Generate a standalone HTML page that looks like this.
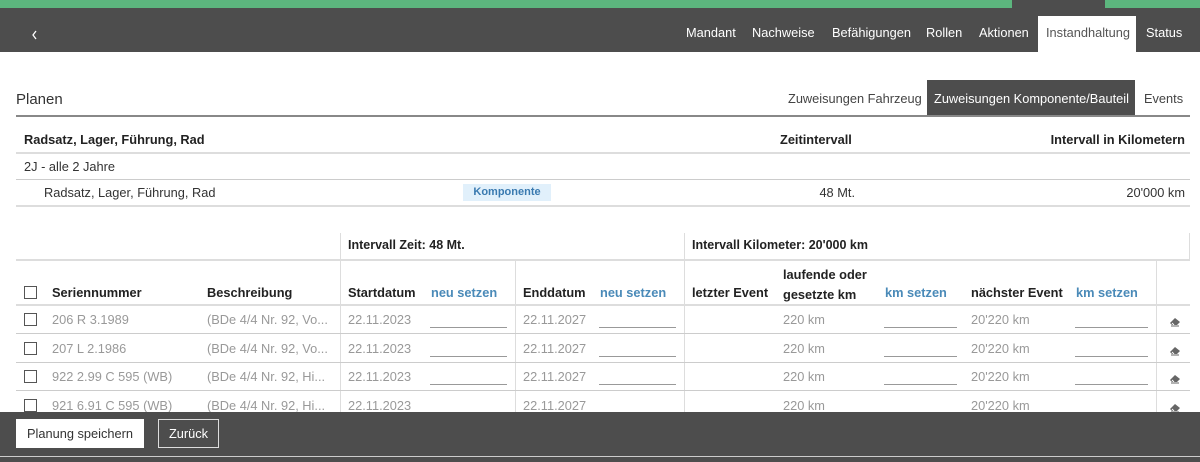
<!DOCTYPE html>
<html><head><meta charset="utf-8"><style>
*{margin:0;padding:0;box-sizing:border-box}
body{width:1200px;height:462px;overflow:hidden;background:#fff;font-family:"Liberation Sans",Arial,sans-serif;font-size:12.8px;color:#333;position:relative}
.a{position:absolute;white-space:nowrap}
.b{font-weight:bold;color:#222}
.g{color:#999}
.l{color:#4a8ab8;font-weight:bold}
.hl{position:absolute;height:1px;background:#ddd}
.vl{position:absolute;width:1px;background:#ddd}
.cb{position:absolute;width:13px;height:13px;border:1px solid #555;background:#fff}
.in{position:absolute;height:1px;background:#999}
.nav{position:absolute;top:25px;color:#fff;font-size:12.8px}
</style></head><body>
<div class="a" style="left:0;top:0;width:1200px;height:8px;background:#5cb67e"></div>
<div class="a" style="left:1012px;top:0;width:93px;height:8px;background:#4d4d4d"></div>
<div class="a" style="left:0;top:8px;width:1200px;height:44px;background:#4d4d4d"></div>
<svg class="a" style="left:31px;top:30px" width="7" height="10" viewBox="0 0 7 10"><path d="M5 1 L2 5 L5 9" stroke="#fff" stroke-width="1.3" fill="none"/></svg>
<div class="nav a" style="left:686px">Mandant</div>
<div class="nav a" style="left:752px">Nachweise</div>
<div class="nav a" style="left:832px">Befähigungen</div>
<div class="nav a" style="left:926px">Rollen</div>
<div class="nav a" style="left:979px">Aktionen</div>
<div class="a" style="left:1038px;top:16px;width:98px;height:36px;background:#fff"></div>
<div class="nav a" style="left:1046px;color:#555">Instandhaltung</div>
<div class="nav a" style="left:1146px">Status</div>

<div class="a" style="left:16px;top:91px;font-size:15px;color:#333">Planen</div>
<div class="a" style="left:788px;top:91px;color:#444">Zuweisungen Fahrzeug</div>
<div class="a" style="left:927px;top:80px;width:208px;height:36px;background:#4d4d4d"></div>
<div class="a" style="left:934px;top:91px;color:#fff">Zuweisungen Komponente/Bauteil</div>
<div class="a" style="left:1144px;top:91px;color:#444">Events</div>
<div class="a" style="left:16px;top:115px;width:1174px;height:2px;background:#888"></div>

<div class="a b" style="left:24px;top:132px">Radsatz, Lager, Führung, Rad</div>
<div class="a b" style="left:780px;top:132px">Zeitintervall</div>
<div class="a b" style="right:15px;top:132px">Intervall in Kilometern</div>
<div class="hl" style="left:16px;top:152px;width:1174px;height:2px"></div>
<div class="a" style="left:24px;top:159px">2J - alle 2 Jahre</div>
<div class="hl" style="left:16px;top:179px;width:1174px;background:#ccc"></div>
<div class="a" style="left:44px;top:185px">Radsatz, Lager, Führung, Rad</div>
<div class="a" style="left:463px;top:184px;width:88px;height:17px;background:#e1f0fb;color:#3a7ab0;font-weight:bold;font-size:11px;text-align:center;padding-top:2px">Komponente</div>
<div class="a" style="right:345px;top:185px">48 Mt.</div>
<div class="a" style="right:15px;top:185px">20'000 km</div>
<div class="hl" style="left:16px;top:205px;width:1174px;height:2px"></div>

<div class="vl" style="left:340px;top:233px;height:179px"></div>
<div class="vl" style="left:684px;top:233px;height:179px"></div>
<div class="vl" style="left:1189px;top:233px;height:27px"></div>
<div class="vl" style="left:515px;top:260px;height:152px"></div>
<div class="vl" style="left:1156px;top:260px;height:152px"></div>
<div class="a b" style="left:348px;top:238px;font-size:12.5px">Intervall Zeit: 48 Mt.</div>
<div class="a b" style="left:692px;top:238px;font-size:12.5px">Intervall Kilometer: 20'000 km</div>
<div class="hl" style="left:16px;top:259px;width:1174px;height:2px"></div>
<div class="cb" style="left:24px;top:286px"></div>
<div class="a b" style="left:52px;top:285px">Seriennummer</div>
<div class="a b" style="left:207px;top:285px">Beschreibung</div>
<div class="a b" style="left:348px;top:285px">Startdatum</div>
<div class="a l" style="left:431px;top:285px">neu setzen</div>
<div class="a b" style="left:523px;top:285px">Enddatum</div>
<div class="a l" style="left:600px;top:285px">neu setzen</div>
<div class="a b" style="left:692px;top:285px">letzter Event</div>
<div class="a b" style="left:783px;top:265px;line-height:20px">laufende oder<br>gesetzte km</div>
<div class="a l" style="left:885px;top:285px">km setzen</div>
<div class="a b" style="left:971px;top:285px">nächster Event</div>
<div class="a l" style="left:1076px;top:285px">km setzen</div>
<div class="hl" style="left:16px;top:304px;width:1174px;height:2px"></div>

<div id="rows"></div>
<script>
var d=[["206 R 3.1989","(BDe 4/4 Nr. 92, Vo..."],["207 L 2.1986","(BDe 4/4 Nr. 92, Vo..."],["922 2.99 C 595 (WB)","(BDe 4/4 Nr. 92, Hi..."],["921 6.91 C 595 (WB)","(BDe 4/4 Nr. 92, Hi..."]];
var h="";
d.forEach(function(r,i){var y=306+i*28.5;var t=y+6;
h+='<div class="cb" style="left:24px;top:'+(t+1)+'px"></div>';
h+='<div class="a g" style="left:52px;top:'+t+'px">'+r[0]+'</div>';
h+='<div class="a g" style="left:207px;top:'+t+'px">'+r[1]+'</div>';
h+='<div class="a g" style="left:348px;top:'+t+'px">22.11.2023</div>';
h+='<div class="a g" style="left:523px;top:'+t+'px">22.11.2027</div>';
h+='<div class="a g" style="left:783px;top:'+t+'px">220 km</div>';
h+='<div class="a g" style="left:971px;top:'+t+'px">20\'220 km</div>';
if(i<3){[[430,77],[599,77],[884,73],[1075,73]].forEach(function(p){h+='<div class="in" style="left:'+p[0]+'px;top:'+(y+21)+'px;width:'+p[1]+'px"></div>';});
h+='<div class="hl" style="left:16px;top:'+(y+27)+'px;width:1174px;background:#ccc"></div>';}
h+='<svg class="a" style="left:1169px;top:'+(y+11)+'px" width="12" height="10" viewBox="0 0 12 10"><path d="M1 6 L6 1 L11 5 L8 8 L3 8 Z" fill="#666"/><path d="M2 9 L10 9" stroke="#666" stroke-width="1"/><path d="M3 6 L5 8" stroke="#fff" stroke-width="1"/></svg>';
});
document.getElementById("rows").innerHTML=h;
</script>

<div class="a" style="left:0;top:412px;width:1200px;height:50px;background:#4d4d4d"></div>
<div class="a" style="left:0;top:456px;width:1200px;height:1px;background:#ccc"></div>
<div class="a" style="left:16px;top:419px;width:128px;height:29px;background:#fff;color:#333;text-align:center;line-height:29px">Planung speichern</div>
<div class="a" style="left:158px;top:419px;width:61px;height:29px;border:1px solid #ddd;color:#fff;text-align:center;line-height:27px">Zurück</div>
</body></html>
